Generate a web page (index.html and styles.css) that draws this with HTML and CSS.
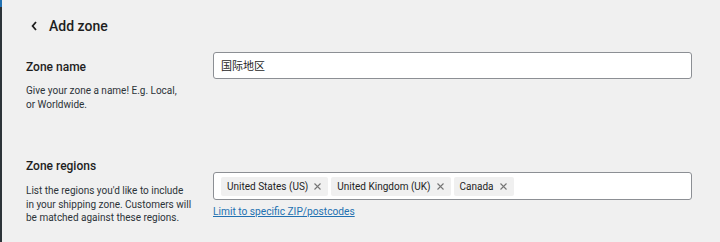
FILE: index.html
```html
<!DOCTYPE html>
<html lang="en">
<head>
<meta charset="utf-8">
<title>Add zone</title>
<link rel="stylesheet" href="styles.css">
</head>
<body>
<div class="app">
  <div class="adminbar"><div class="adminbar-active"></div></div>
  <main class="main">
    <header class="header">
      <svg class="back" width="7" height="10" viewBox="0 0 7 10" aria-hidden="true"><path d="M5 1 L1.6 5 L5 9" fill="none" stroke="#1e1e1e" stroke-width="1.8"/></svg>
      <h1 class="title">Add zone</h1>
    </header>
    <section class="row row-name">
      <div class="label">
        <h2 class="label-title">Zone name</h2>
        <p class="label-desc">Give your zone a name! E.g. Local, or Worldwide.</p>
      </div>
      <div class="field">
        <div class="input">国际地区</div>
      </div>
    </section>
    <section class="row row-regions">
      <div class="label">
        <h2 class="label-title">Zone regions</h2>
        <p class="label-desc">List the regions you'd like to include in your shipping zone. Customers will be matched against these regions.</p>
      </div>
      <div class="field">
        <div class="tokens">
          <span class="chip">United States (US)<svg class="x" width="7" height="7" viewBox="0 0 7 7" aria-hidden="true"><path d="M0.5 0.5 L6.5 6.5 M6.5 0.5 L0.5 6.5" stroke="#757575" stroke-width="1.1"/></svg></span>
          <span class="chip">United Kingdom (UK)<svg class="x" width="7" height="7" viewBox="0 0 7 7" aria-hidden="true"><path d="M0.5 0.5 L6.5 6.5 M6.5 0.5 L0.5 6.5" stroke="#757575" stroke-width="1.1"/></svg></span>
          <span class="chip">Canada<svg class="x" width="7" height="7" viewBox="0 0 7 7" aria-hidden="true"><path d="M0.5 0.5 L6.5 6.5 M6.5 0.5 L0.5 6.5" stroke="#757575" stroke-width="1.1"/></svg></span>
        </div>
        <a class="link" href="#">Limit to specific ZIP/postcodes</a>
      </div>
    </section>
  </main>
</div>
</body>
</html>
```
FILE: styles.css
```css
html, body {
  margin: 0;
  padding: 0;
  background: #f0f0f0;
}
body {
  font-family: Roboto, "Noto Sans", "Noto Sans CJK SC", sans-serif;
  color: #1e1e1e;
  width: 720px;
  height: 242px;
  overflow: hidden;
}
.app {
  display: flex;
  height: 242px;
}
.adminbar {
  width: 2px;
  background: #2c3338;
  flex: none;
}
.adminbar-active {
  height: 7px;
  background: #2271b1;
}
.main {
  flex: 1;
  padding: 0 28px 0 24px;
}
.header {
  display: flex;
  align-items: center;
  height: 50px;
  padding-top: 2px;
  padding-left: 5px;
  box-sizing: border-box;
}
.back {
  display: block;
  margin-right: 11px;
}
.title {
  margin: 0;
  font-size: 14px;
  font-weight: 500;
  line-height: 18px;
}
.row {
  display: grid;
  grid-template-columns: 187px 1fr;
}
.row-name {
  padding-top: 2px;
  height: 106px;
}
.row-name .label {
  padding-top: 7px;
}
.label-title {
  margin: 0;
  font-size: 12px;
  font-weight: 500;
  line-height: 16px;
}
.label-desc {
  margin: 9px 0 0;
  font-size: 10px;
  line-height: 13.5px;
  color: #2c3338;
  width: 156px;
}
.row-regions .label-desc {
  width: 166px;
  margin-top: 10px;
}
.input {
  box-sizing: border-box;
  height: 27px;
  border: 1px solid #8c8f94;
  border-radius: 3px;
  background: #fff;
  padding: 0 7px;
  font-size: 11px;
  line-height: 25px;
  font-family: "Noto Sans CJK SC", sans-serif;
}
.row-regions .field {
  padding-top: 14px;
}
.tokens {
  box-sizing: border-box;
  height: 28px;
  border: 1px solid #8c8f94;
  border-radius: 3px;
  background: #fff;
  padding: 4px 7px;
  display: flex;
  gap: 3px;
}
.chip {
  display: inline-flex;
  align-items: center;
  height: 19px;
  background: #f0f0f0;
  border-radius: 2px;
  padding: 0 7px 0 6px;
  font-size: 10px;
  color: #1e1e1e;
}
.x {
  display: block;
  margin-left: 6px;
}
.link {
  display: inline-block;
  margin-top: 5px;
  font-size: 10.2px;
  color: #2271b1;
  text-decoration: underline;
}
```
